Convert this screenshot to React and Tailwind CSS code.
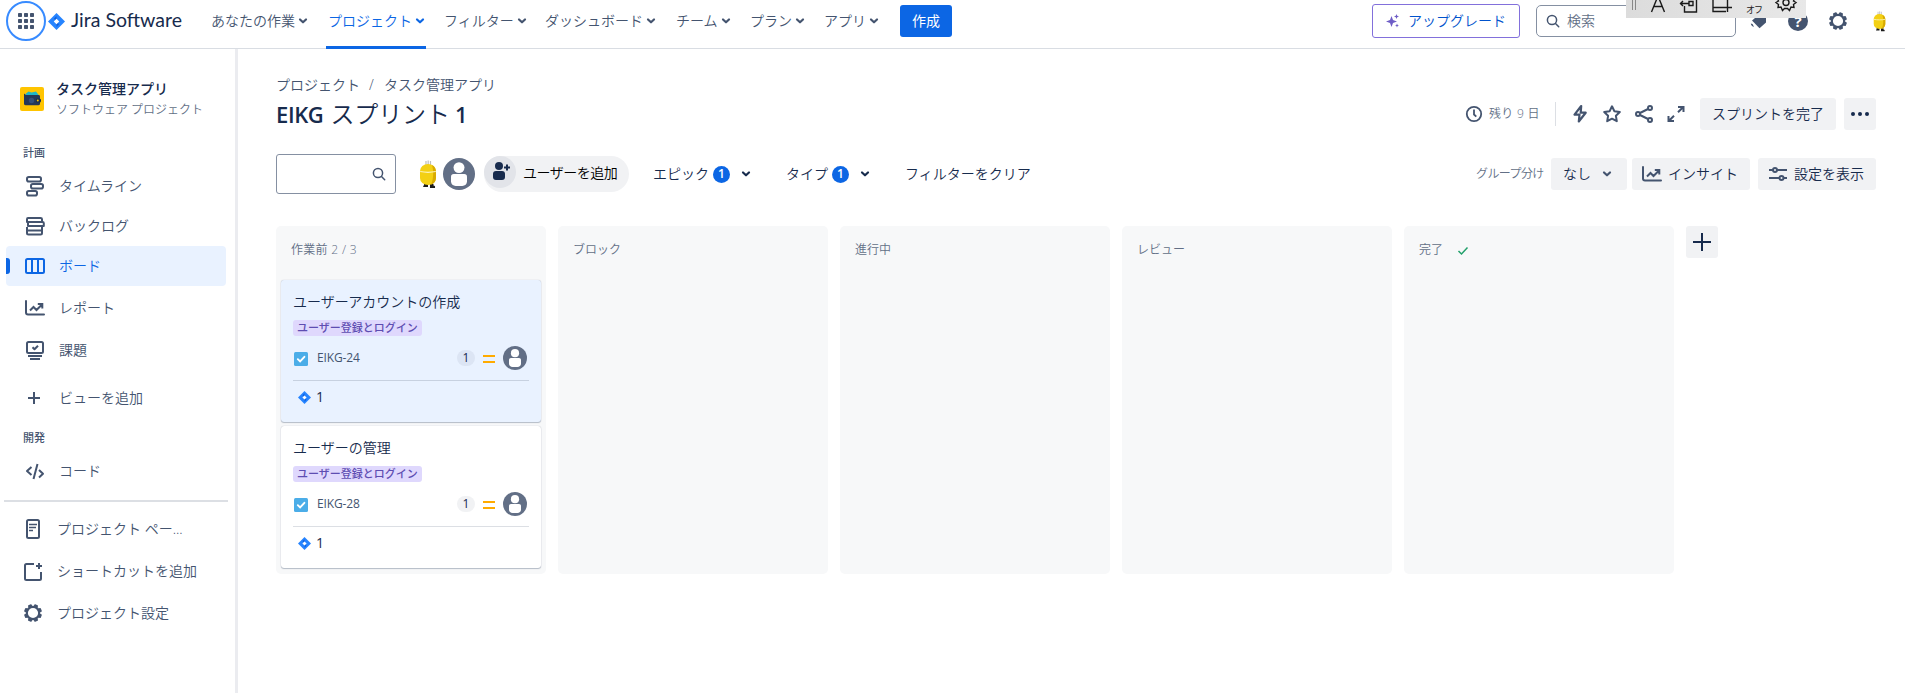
import React from "react";

const Chevron = ({ className = "" }) => (
  <svg className={`shrink-0 ${className}`} width="10" height="8" viewBox="0 0 10 8" fill="none" stroke="currentColor" strokeWidth="2.2" strokeLinecap="round" strokeLinejoin="round">
    <path d="M2 2.5 5 5.3 8 2.5" />
  </svg>
);

const Icon = ({ size = 24, className = "", children }) => (
  <svg className={`shrink-0 ${className}`} width={size} height={size} viewBox="0 0 24 24" fill="none" stroke="currentColor" strokeWidth="2" strokeLinejoin="round">
    {children}
  </svg>
);

const Gear = ({ size = 24, className = "" }) => (
  <Icon size={size} className={className}>
    <circle cx="12" cy="12" r="6.2" strokeWidth="2.2" />
    {[0, 45, 90, 135, 180, 225, 270, 315].map((a) => (
      <rect key={a} x="10" y="3" width="4" height="3" rx="0.8" fill="currentColor" stroke="none" transform={`rotate(${a + 22.5} 12 12)`} />
    ))}
  </Icon>
);

const SearchIcon = ({ size = 14 }) => (
  <svg className="shrink-0 text-[#44546f]" width={size} height={size} viewBox="0 0 14 14" fill="none" stroke="currentColor" strokeWidth="1.5" strokeLinecap="round">
    <circle cx="6" cy="6" r="4.6" />
    <path d="m9.5 9.5 3.2 3.2" />
  </svg>
);

const JiraMark = ({ size }) => (
  <svg className="shrink-0" width={size} height={size} viewBox="0 0 18 18">
    <path d="M9 0 18 9 9 18 0 9Z" fill="#2684ff" />
    <path d="M9 3.2 6.3 6 9 9V3.2Z M9 14.8 11.7 12 9 9v5.8Z" fill="#0f5fdc" />
    <path d="M9 6.1 11.9 9 9 11.9 6.1 9Z" fill="#fff" />
  </svg>
);

const ChartIcon = ({ className = "" }) => (
  <Icon className={className}>
    <path d="M3 5v11.5c0 1.4.6 2 2 2h16" strokeLinecap="round" />
    <path d="M7 14.5 10.5 11l3 3L19 8.5M14.8 8H19.3v4.5" strokeLinejoin="miter" />
  </Icon>
);

const Minion = ({ height }) => (
  <svg className="shrink-0" height={height} width={height * 0.62} viewBox="0 0 18 29">
    <path d="M7 1v5M9.200 .5v5M11.500 1v5" stroke="#bdbdbd" strokeWidth="1.200" />
    <path d="M5 23h4v4H4.300C4 26 4.500 25.500 5 25.500ZM11 24H14.500v1.500c1.500 0 2 1 1.500 2.500H11Z" fill="#1b1b1b" />
    <rect x="1" y="4" width="16" height="21" rx="8" ry="7" fill="#f3d014" />
    <path d="M13 5c3 1.500 4 4 4 7v6c0 3-2 5.800-5 6.800 2.500-5 3-13 1-19.800Z" fill="#d9ab00" />
    <path d="M1.200 11.500c5 1 10.500 1 15.600 0" stroke="#fbf3bd" strokeWidth="1.200" fill="none" />
  </svg>
);

const Person = ({ size }) => (
  <svg className="shrink-0" width={size} height={size} viewBox="0 0 24 24">
    <circle cx="12" cy="12" r="12" fill="#626f86" />
    <circle cx="12" cy="7.200" r="4.100" fill="#fff" />
    <path d="M6 14c0-1.300.8-2 2-2h8c1.200 0 2 .7 2 2v3.500c0 2.300-1.600 3.500-3.500 3.500h-5C7.600 21 6 19.800 6 17.500Z" fill="#fff" />
  </svg>
);

const nav = [
  { label: "あなたの作業", w: "w-[117px]" },
  { label: "プロジェクト", w: "w-[116px]", active: true },
  { label: "フィルター", w: "w-[101px]" },
  { label: "ダッシュボード", w: "w-[131px]" },
  { label: "チーム", w: "w-[74px]" },
  { label: "プラン", w: "w-[74px]" },
  { label: "アプリ", w: "w-[75px]" },
];

function Header() {
  return (
    <header className="relative flex h-[49px] shrink-0 border-b border-[#d9dde3] pl-[6px] text-[#44546f]">
      <div className="mt-px flex size-10 items-center justify-center rounded-full border-2 border-[#388bff]">
        <svg width="16" height="16" viewBox="0 0 16 16" fill="currentColor">
          {[0, 6, 12].map((y) => [0, 6, 12].map((x) => <rect key={`${x}-${y}`} x={x} y={y} width="4" height="4" rx="0.700" />))}
        </svg>
      </div>
      <div className="ml-[2px] flex h-[42px] w-[163px] items-center gap-[6px]">
        <JiraMark size={17} />
        <span className="-mt-[2px] whitespace-nowrap font-['Lato'] text-[19.5px] leading-none font-normal text-[#172b4d]">Jira Software</span>
      </div>
      <nav className="flex h-[49px] items-start">
        {nav.map((n) => (
          <div key={n.label} className={`relative flex h-[42px] shrink-0 items-center ${n.w} ${n.active ? "text-[#0c66e4]" : ""}`}>
            <span className="whitespace-nowrap">{n.label}</span>
            <Chevron className="ml-[3px]" />
            {n.active && <span className="absolute top-[46px] left-[-2px] h-[3px] w-[100px] bg-[#0c66e4]" />}
          </div>
        ))}
      </nav>
      <button className="mt-[5px] ml-px flex h-8 w-[52px] items-center justify-center rounded-[3px] bg-[#0c66e4] font-normal text-white">作成</button>

      <div className="ml-auto flex h-[42px] items-center">
        <button className="flex h-[34px] w-[148px] items-center rounded-[3px] border border-[#8270db] pl-[13px] text-[#0052cc]">
          <svg width="14" height="14" viewBox="0 0 14 14" fill="#6e5dc6">
            <path d="M5.500 2 7 6 11 7.500 7 9 5.500 13 4 9 0 7.500 4 6ZM10.500 0l.7 1.800 1.800.7-1.800.7-.7 1.800-.7-1.800L8 2.500l1.800-.7ZM11 9.500l.6 1.400 1.400.6-1.400.6-.6 1.400-.6-1.400-1.400-.6 1.400-.6Z" />
          </svg>
          <span className="ml-[8px] whitespace-nowrap">アップグレード</span>
        </button>
        <div className="ml-[16px] flex h-8 w-[200px] items-center gap-[7px] rounded-[5px] border border-[#8590a2] pl-[9px] text-[#626f86]">
          <SearchIcon size={14} />
          <span>検索</span>
        </div>
        <svg className="ml-[14px]" width="16" height="22" viewBox="0 0 16 22" fill="currentColor">
          <path d="M2 10.500 5 8h11v4.500L9.500 18.300Z" />
          <path d="M.8 13.500c.2 2 1.500 3 3.200 3.300L2.500 14Z" />
        </svg>
        <div className="ml-[22px] flex size-[20px] items-center justify-center rounded-full bg-[#44546f] font-['Open_Sans'] text-[15px] font-bold text-white">?</div>
        <Gear className="ml-[18px]" size={24} />
        <div className="mr-[19px] ml-[23px]"><Minion height={21} /></div>
      </div>

      <div className="absolute top-0 left-[1626px] flex h-[18px] w-[180px] items-start overflow-hidden bg-gradient-to-r from-[#dcdcdc] to-[#e8e8e8] text-[#1a1a1a]">
        <svg width="180" height="18" viewBox="0 0 180 18" fill="none" stroke="currentColor" strokeWidth="1.400">
          <path d="M6.500 0v10M9.500 0v10" stroke="#888" strokeWidth="1" />
          <path d="M25.500 12 32-4 38.500 12M28 6.500h8" />
          <path d="M58.500 6v6h12V-1M54 3.500h9M57 1l-2.500 2.500L57 6M63 1.500h4v4h-4Z" />
          <path d="M87-2v13.500h13M87 7.500h9M101.500 0v12M96 7.500h10" />
          <circle cx="160" cy="2.500" r="3" />
          <path d="m151.500-1 1 2-2.500 1.500 2.500 2-.5 3 3-.5 1.500 3.500 2-2h3l2 2 1.500-3.500 3 .5-.5-3 2.500-2-2.500-1.500 1-2" />
        </svg>
        <span className="absolute top-[2px] left-[120px] text-[9px] leading-[16px] font-normal tracking-[-1px]">オフ</span>
      </div>
    </header>
  );
}

const SideItem = ({ icon, label, h, active, indent = "pl-[17px]" }) => (
  <div className={`relative ml-[6px] flex w-[220px] shrink-0 items-center rounded-[4px] ${indent} ${h} ${active ? "bg-[#e9f2ff] text-[#0c66e4]" : ""}`}>
    {active && <span className="absolute top-[12px] left-0 h-4 w-1 rounded-r-[3px] bg-[#0c66e4]" />}
    {icon}
    <span className="-mt-px ml-[12px] whitespace-nowrap">{label}</span>
  </div>
);

function Sidebar() {
  return (
    <aside className="flex w-[238px] shrink-0 flex-col border-r-[3px] border-[#ebecf0] text-[#44546f]">
      <div className="mt-[29px] flex h-[42px] items-center pl-[20px]">
        <svg width="24" height="24" viewBox="0 0 24 24">
          <rect width="24" height="24" rx="2" fill="#ffc400" />
          <path d="M5.500 7 8.500 4.500l3 1 4.500-1L19 8.500H6Z" fill="#1fb6c9" />
          <path d="M4 6.500 6 8h12.500c1 0 1.500.5 1.500 1.500v7c0 1-.5 1.700-1.500 1.700H5.500C4.500 18.200 4 17.500 4 16.500Z" fill="#253858" />
          <circle cx="11.500" cy="13.500" r="2.700" fill="#344f7a" />
          <rect x="16" y="11.500" width="5" height="4" rx="1.500" fill="#172b4d" />
          <circle cx="17.800" cy="13.500" r="1" fill="#ffc400" />
        </svg>
        <div className="ml-[12px] flex flex-col">
          <span className="h-[21px] text-[14px] leading-[19px] font-medium whitespace-nowrap text-[#172b4d]">タスク管理アプリ</span>
          <span className="h-[19px] text-[12px] leading-[19px] whitespace-nowrap text-[#626f86]">ソフトウェア プロジェクト</span>
        </div>
      </div>
      <div className="mt-[25px] flex h-4 items-center pl-[23px] text-[11px] font-medium">計画</div>
      <div className="mt-[5px] flex flex-col">
        <SideItem h="h-[40px]" label="タイムライン" icon={<Icon><rect x="4" y="3" width="14" height="4.500" rx="1.800" /><rect x="8" y="10" width="12" height="4.500" rx="1.800" /><rect x="4" y="17" width="10" height="4.500" rx="1.800" /></Icon>} />
        <SideItem h="h-[40px]" label="バックログ" icon={<Icon><path d="M5 4h12.500c1 0 1.500.4 1.500 1.300V8H4V5.300C4 4.400 4.300 4 5 4ZM6 8h13.500c.8 0 1.300.4 1.300 1.300V12H5V9M4.500 12H19v4.500H4V13M4 16.500h15V19c0 1-.5 1.500-1.500 1.500h-12C4.500 20.500 4 20 4 19Z" /></Icon>} />
        <SideItem h="h-[40px]" active label="ボード" icon={<Icon><rect x="3" y="5" width="18" height="14" rx="1.500" /><path d="M9 5v14M15 5v14" /></Icon>} />
        <SideItem h="mt-[2px] h-[40px]" label="レポート" icon={<ChartIcon />} />
        <SideItem h="mt-[2px] h-[40px]" label="課題" icon={<Icon><rect x="4" y="4" width="16" height="11" rx="1.500" /><path d="m9.500 9.300 2 2 3.500-3.600M5 18h14M7 21h10" /></Icon>} />
        <SideItem h="mt-[8px] h-[40px]" label="ビューを追加" icon={<Icon><path d="M11 6v12M5 12h12" /></Icon>} />
      </div>
      <div className="mt-[12px] flex h-4 items-center pl-[23px] text-[11px] font-medium">開発</div>
      <SideItem h="mt-[5px] h-[40px]" label="コード" icon={<Icon><path d="m8.500 8-4.500 4 4.500 4M14.500 5l-4 15M16 11l4 3.800-4 3.700" /></Icon>} />
      <div className="mt-[9px] ml-[4px] h-[2px] w-[224px] bg-[#dcdfe4]" />
      <SideItem h="mt-[7px] h-[40px]" indent="pl-[15px]" label="プロジェクト ペー..." icon={<Icon><rect x="6" y="3" width="12" height="18" rx="1.500" /><path d="M8 7.500h8M8 10.500h7M8 13.500h4" strokeWidth="1.700" /></Icon>} />
      <SideItem h="mt-[2px] h-[41px]" indent="pl-[15px]" label="ショートカットを追加" icon={<Icon><path d="M13 4H5.500C4.500 4 4 4.500 4 5.500v13c0 1 .5 1.500 1.500 1.500h13c1 0 1.500-.5 1.500-1.500V12M18 3v6M15 6h6" /></Icon>} />
      <SideItem h="mt-px h-[40px]" indent="pl-[15px]" label="プロジェクト設定" icon={<Gear />} />
    </aside>
  );
}

const Count = () => (
  <span className="flex size-[17px] items-center justify-center rounded-full bg-[#0c66e4] font-['Open_Sans'] text-[12px] leading-none font-semibold text-white">1</span>
);

function PageTop() {
  return (
    <div className="flex h-[177px] shrink-0 flex-col">
      <div className="mt-[25px] flex h-[22px] items-center whitespace-nowrap text-[#44546f]">
        <span>プロジェクト</span>
        <span className="ml-[9px] w-[15px]">/</span>
        <span>タスク管理アプリ</span>
      </div>
      <div className="mt-[2px] flex h-8 items-center text-[#44546f]">
        <h1 className="flex items-center whitespace-nowrap text-[24px] leading-8 text-[#172b4d]">
          <span className="font-['Open_Sans'] text-[22px] font-semibold tracking-[-0.4px]">EIKG</span>
          <span className="ml-[7px] tracking-[-0.1px]">スプリント</span>
          <span className="ml-[5px] font-['Open_Sans'] text-[22px] font-semibold">1</span>
        </h1>
        <div className="ml-auto flex h-8 items-center">
          <svg width="18" height="18" viewBox="0 0 18 18" fill="none" stroke="currentColor" strokeWidth="1.800"><circle cx="9" cy="9" r="7.200" /><path d="M9 4.500V9.500l2.300 2.200" /></svg>
          <span className="ml-[6px] w-[50px] whitespace-nowrap text-[12px] tracking-[0.3px] text-[#626f86]">残り 9 日</span>
          <span className="ml-[16px] h-6 w-px bg-[#dcdfe4]" />
          <Icon className="ml-[12px]"><path d="M13.200 4 6.500 12.600h5L10.800 19.500 17.700 10.700h-5Z" strokeWidth="2.200" /></Icon>
          <Icon className="ml-[8px]"><path d="m12 4.300 2.400 4.900 5.400.8-3.900 3.800.9 5.400-4.800-2.500-4.800 2.500.9-5.400L4.200 10l5.400-.8Z" /></Icon>
          <Icon className="ml-[8px]"><circle cx="6" cy="12" r="2" /><circle cx="18" cy="6" r="2" /><circle cx="18" cy="18" r="2" /><path d="M8 11 16 7M8 13l8 4" /></Icon>
          <Icon className="ml-[8px]"><path d="M14 5h5.500v5M19 5.200l-5 5M10 19H4.500v-5M5 18.800l5-5" strokeLinejoin="miter" /></Icon>
          <button className="ml-[12px] flex h-8 w-[136px] items-center justify-center rounded-[3px] bg-[#f1f2f4] text-[#172b4d]">スプリントを完了</button>
          <button className="ml-[8px] flex size-8 items-center justify-center rounded-[3px] bg-[#f1f2f4]">
            <svg width="20" height="6" viewBox="0 0 20 6" fill="#172b4d"><circle cx="3" cy="3" r="2" /><circle cx="10" cy="3" r="2" /><circle cx="17" cy="3" r="2" /></svg>
          </button>
        </div>
      </div>
      <div className="mt-[24px] flex h-10 items-center text-[#172b4d]">
        <div className="flex h-10 w-[120px] items-center justify-end rounded-[3px] border border-[#8590a2] pr-[9px]"><SearchIcon size={14} /></div>
        <div className="ml-[23px] flex w-[65px] items-center">
          <Minion height={29} />
          <span className="ml-[6px] flex"><Person size={32} /></span>
        </div>
        <button className="mt-[2px] flex h-9 w-[145px] items-center self-start rounded-full bg-[#f1f2f4] text-black">
          <span className="flex size-8 items-center justify-center self-start rounded-full bg-[#e2e4e9]">
            <svg className="-mt-[2px] ml-[2px]" width="20" height="20" viewBox="0 0 20 20" fill="#172b4d"><circle cx="8" cy="5" r="4" /><rect x="2" y="10" width="12" height="9" rx="3" /><path d="M16 3.500v6M13 6.500h6" stroke="#172b4d" strokeWidth="2" /></svg>
          </span>
          <span className="-mt-[2px] ml-[7px] whitespace-nowrap tracking-[-0.5px]">ユーザーを追加</span>
        </button>
        <div className="ml-[24px] flex w-[133px] items-center">
          <span className="w-[60px] whitespace-nowrap">エピック</span><Count /><Chevron className="ml-[11px]" />
        </div>
        <div className="flex w-[119px] items-center">
          <span className="w-[46px] whitespace-nowrap">タイプ</span><Count /><Chevron className="ml-[11px]" />
        </div>
        <span className="whitespace-nowrap">フィルターをクリア</span>
        <div className="ml-auto flex h-8 items-center">
          <span className="w-[75px] whitespace-nowrap text-[12px] tracking-[-0.6px] text-[#626f86]">グループ分け</span>
          <button className="flex h-8 w-[76px] items-center rounded-[3px] bg-[#f1f2f4] pl-[12px]">なし<Chevron className="ml-[11px] text-[#44546f]" /></button>
          <button className="ml-[5px] flex h-8 w-[118px] items-center rounded-[3px] bg-[#f1f2f4] pl-[8px]"><ChartIcon className="text-[#44546f]" /><span className="ml-[4px]">インサイト</span></button>
          <button className="ml-[8px] flex h-8 w-[118px] items-center rounded-[3px] bg-[#f1f2f4] pl-[8px]">
            <Icon className="text-[#44546f]"><path d="M3 8h4M11 8h10M3 16h10M17 16h4" /><circle cx="9" cy="8" r="2" /><circle cx="15.500" cy="16" r="2" /></Icon>
            <span className="ml-[4px]">設定を表示</span>
          </button>
        </div>
      </div>
    </div>
  );
}

const Card = ({ title, id, selected }) => (
  <div className={`flex h-[142px] w-[260px] flex-col rounded-[3px] px-[12px] shadow-[0_1px_1px_#091e4240,0_0_1px_#091e424f] ${selected ? "bg-[#e9f2ff]" : "bg-white"}`}>
    <span className="mt-[12px] h-[20px] leading-[20px] whitespace-nowrap text-[#172b4d]">{title}</span>
    <span className="mt-[8px] flex h-4 w-[129px] items-center rounded-[3px] bg-[#dfd8fd] pb-px pl-[4px] text-[11px] leading-none font-medium whitespace-nowrap text-[#5e4db2]">ユーザー登録とログイン</span>
    <div className="mt-[10px] flex h-6 items-center">
      <svg className="mt-[2px] ml-px" width="14" height="14" viewBox="0 0 14 14"><rect width="14" height="14" rx="1.500" fill="#4bade8" /><path d="m3.800 7.200 2.300 2.300 4.300-4.700" fill="none" stroke="#fff" strokeWidth="1.900" strokeLinecap="round" /></svg>
      <span className="ml-[9px] font-['Open_Sans'] text-[12px] font-normal tracking-[-0.15px] text-[#44546f]">{id}</span>
      <span className={`ml-auto flex h-4 w-[18px] items-center justify-center rounded-full font-['Open_Sans'] text-[12px] leading-none font-normal text-[#172b4d] ${selected ? "bg-[#dce5f4]" : "bg-[#f1f2f4]"}`}>1</span>
      <span className="mt-[2px] ml-[8px] flex h-[8px] w-[12px] flex-col justify-between"><i className="h-[2px] bg-[#ffab00]" /><i className="h-[2px] bg-[#ffab00]" /></span>
      <span className="mr-[2px] ml-[8px] flex"><Person size={24} /></span>
    </div>
    <div className={`mt-[10px] h-px ${selected ? "bg-[#c7d1e0]" : "bg-[#dcdfe4]"}`} />
    <div className="mt-[7px] flex h-[18px] items-center pl-[5px]">
      <JiraMark size={13} />
      <span className="ml-[5px] font-['Open_Sans'] text-[14px] leading-none font-normal text-[#172b4d]">1</span>
    </div>
  </div>
);

const Column = ({ title, done, children }) => (
  <section className="flex h-[348px] w-[270px] shrink-0 flex-col rounded-[5px] bg-[#f7f8f9]">
    <div className="flex h-[54px] items-center gap-[14px] pb-[7px] pl-[15px] text-[12px] whitespace-nowrap text-[#626f86]">
      {title}
      {done && <svg className="mt-[3px]" width="12" height="10" viewBox="0 0 12 10" fill="none" stroke="#22a06b" strokeWidth="1.500"><path d="m1.500 5 3 3 6-6.500" /></svg>}
    </div>
    <div className="flex flex-col gap-[4px] pl-[5px]">{children}</div>
  </section>
);

export default function App() {
  return (
    <div className="flex h-[693px] w-[1905px] flex-col overflow-hidden bg-white font-['Open_Sans','Noto_Sans_CJK_JP',sans-serif] text-[14px] leading-5 font-[350]">
      <Header />
      <div className="flex min-h-0 flex-1">
        <Sidebar />
        <main className="flex flex-1 flex-col pr-[29px] pl-[38px]">
          <PageTop />
          <div className="flex gap-[12px]">
            <Column title={<span className="tracking-[0.3px]">作業前 2 / 3</span>}>
              <Card title="ユーザーアカウントの作成" id="EIKG-24" selected />
              <Card title="ユーザーの管理" id="EIKG-28" />
            </Column>
            <Column title="ブロック" />
            <Column title="進行中" />
            <Column title="レビュー" />
            <Column title="完了" done />
            <button className="flex size-8 items-center justify-center rounded-[3px] bg-[#f1f2f4]">
              <svg width="18" height="18" viewBox="0 0 18 18" stroke="#172b4d" strokeWidth="2"><path d="M9 0v18M0 9h18" /></svg>
            </button>
          </div>
        </main>
      </div>
    </div>
  );
}
